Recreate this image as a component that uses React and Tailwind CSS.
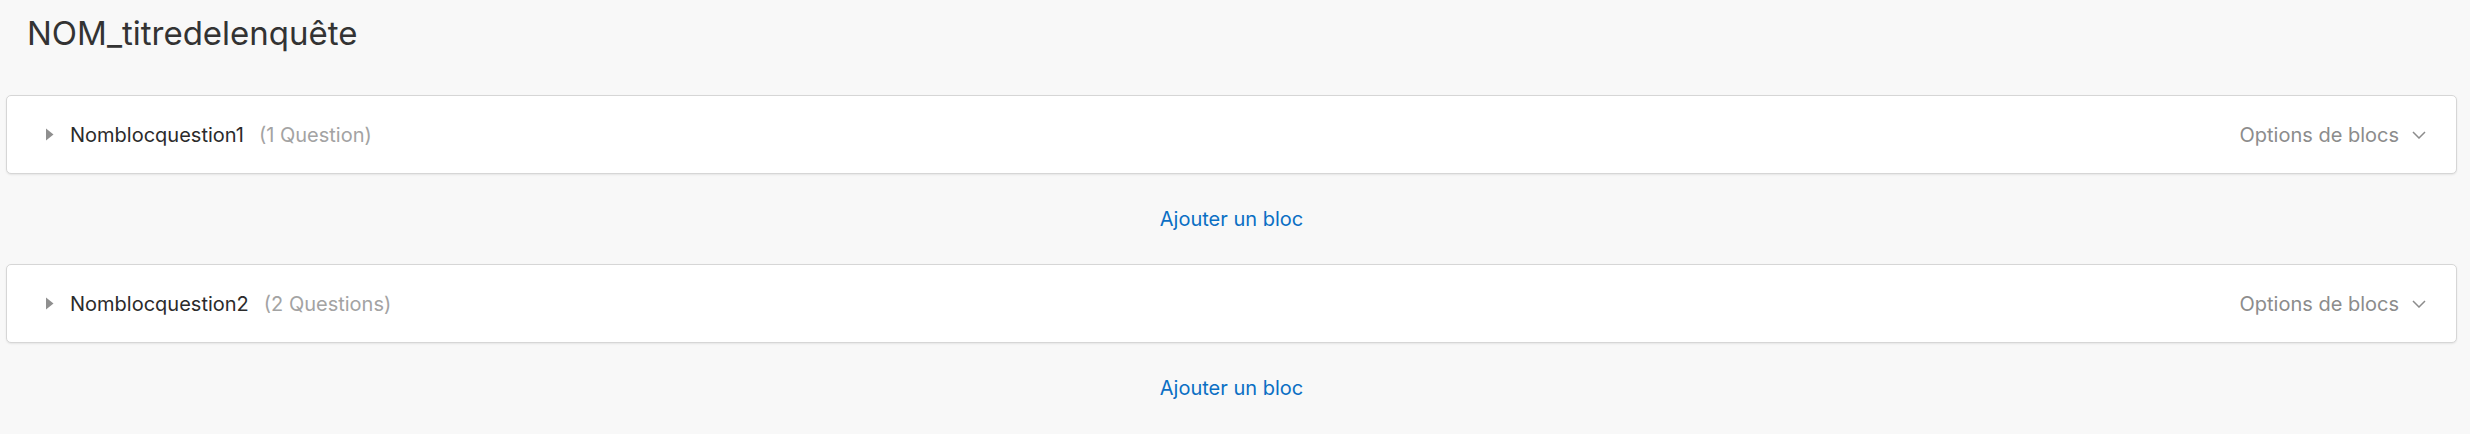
import { useState } from "react";

const blocks = [
  { id: 1, name: "Nomblocquestion1", count: "(1 Question)" },
  { id: 2, name: "Nomblocquestion2", count: "(2 Questions)" },
];

function BlockRow({ block }) {
  return (
    <div className="flex h-[79px] items-center justify-between rounded-[5px] border border-[#d6d6d6] bg-white pl-[39px] pr-[30px] shadow-[0_1px_2px_rgba(0,0,0,0.08)]">
      <div className="flex items-center">
        <svg width="8" height="13" viewBox="0 0 8 13" className="mr-[16px] fill-[#8f8f8f]">
          <path d="M0 0.5 L7.5 6.5 L0 12.5 Z" />
        </svg>
        <span className="text-[20px] text-[#2b2b2b]">{block.name}</span>
        <span className="ml-[15px] text-[20px] text-[#a3a3a3]">{block.count}</span>
      </div>
      <button className="flex items-center gap-[13px] text-[20px] text-[#8c8c8c]">
        Options de blocs
        <svg width="14" height="8" viewBox="0 0 14 8" fill="none" stroke="#8c8c8c" strokeWidth="1.5">
          <path d="M1 1 L7 7 L13 1" />
        </svg>
      </button>
    </div>
  );
}

export default function App() {
  const [list] = useState(blocks);

  return (
    <div className="min-h-screen w-full bg-[#f8f8f8] pl-[6px] pr-[13px] font-['Inter',sans-serif]">
      {/* Survey title */}
      <div className="flex h-[95px] items-start pl-[21px] pt-[12px]">
        <h1 className="text-[33px] font-normal leading-[42px] text-[#333333]">NOM_titredelenquête</h1>
      </div>

      {list.map((b) => (
        <div key={b.id}>
          <BlockRow block={b} />
          <div className="flex h-[90px] items-center justify-center">
            <a href="#" className="text-[20px] text-[#0b6fc4]">Ajouter un bloc</a>
          </div>
        </div>
      ))}
    </div>
  );
}
